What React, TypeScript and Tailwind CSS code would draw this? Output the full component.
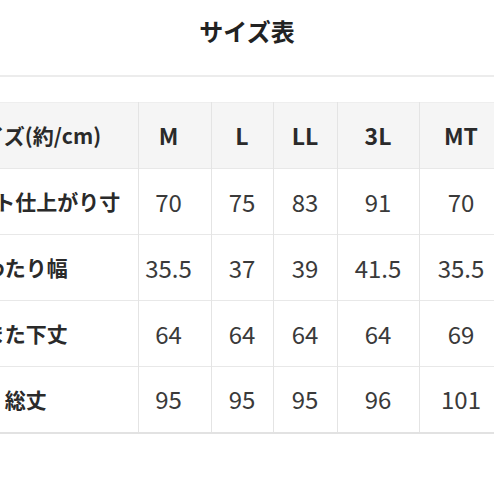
import React from 'react';

const sizes = ['M', 'L', 'LL', '3L', 'MT'];

const rows: { label: string; values: string[] }[] = [
    { label: 'ウエスト仕上がり寸', values: ['70', '75', '83', '91', '70'] },
    { label: 'わたり幅', values: ['35.5', '37', '39', '41.5', '35.5'] },
    { label: 'また下丈', values: ['64', '64', '64', '64', '69'] },
    { label: '総丈', values: ['95', '95', '95', '96', '101'] },
];

// column widths, first one runs off the left edge
const colW = ['w-[73px] pr-[12px]', 'w-[62px]', 'w-[64px]', 'w-[82px]', 'w-[84px]'];

export default function App() {
    return (
        <div
            className="w-[494px] h-[494px] overflow-hidden bg-white text-[#333]"
            style={{ fontFamily: '"Noto Sans CJK JP", "Noto Sans", sans-serif' }}
        >
            <h1 className="h-[63px] pt-[14px] text-center text-[24px] leading-[34px] font-bold text-[#222]">
                サイズ表
            </h1>
            <div className="h-[2px] bg-[#ececec] mt-[12px]" />

            <div className="mt-[25px] -ml-[86px] w-[589px]">
                <table className="border-collapse table-fixed w-[589px]">
                    <thead>
                        <tr className="h-[66px] bg-[#f5f5f5] border-t border-[#eeeeee]">
                            <th className="w-[224px] pl-[12px] text-center text-[21px] font-bold text-[#2a2a2a] border-r border-[#e4e4e4]">
                                サイズ(約/cm)
                            </th>
                            {sizes.map((s, i) => (
                                <th
                                    key={s}
                                    className={`${colW[i]} text-center text-[23px] font-bold text-[#2a2a2a] border-r border-[#e4e4e4]`}
                                >
                                    {s}
                                </th>
                            ))}
                        </tr>
                    </thead>
                    <tbody>
                        {rows.map((r, ri) => (
                            <tr
                                key={r.label}
                                className={`h-[66px] border-t border-[#e8e8e8] ${ri === rows.length - 1 ? 'border-b-2 border-b-[#e2e2e2]' : ''}`}
                            >
                                <td className="text-center text-[21px] font-bold text-[#2a2a2a] border-r border-[#e4e4e4]">
                                    {r.label}
                                </td>
                                {r.values.map((v, i) => (
                                    <td
                                        key={i}
                                        className={`${colW[i]} text-center text-[24px] text-[#3a3a3a] border-r border-[#e4e4e4]`}
                                    >
                                        {v}
                                    </td>
                                ))}
                            </tr>
                        ))}
                    </tbody>
                </table>
            </div>
        </div>
    );
}
